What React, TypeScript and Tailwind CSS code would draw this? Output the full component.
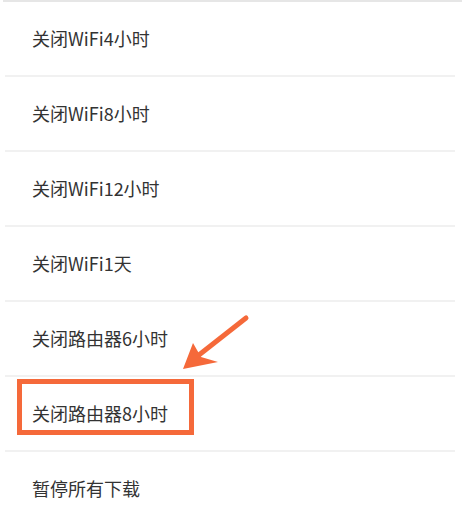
const items = [
  '关闭WiFi4小时',
  '关闭WiFi8小时',
  '关闭WiFi12小时',
  '关闭WiFi1天',
  '关闭路由器6小时',
  '关闭路由器8小时',
  '暂停所有下载',
];

export default function App() {
  return (
    <div
      className="relative w-[465px] h-[513px] overflow-hidden bg-white"
      style={{ fontFamily: '"Noto Sans CJK SC", "Noto Sans", sans-serif' }}
    >
      <div className="border-t-2 border-[#e6e6e6] mx-[3px]" />
      {items.map((label, i) => (
        <div key={label}>
          {i > 0 && <div className="h-[2px] bg-[#f1f1f1] mx-[5px] mr-[10px]" />}
          <div className="flex items-center h-[73px] pl-[32px] text-[18px] text-[#333]">
            {label}
          </div>
        </div>
      ))}

      {/* highlight box */}
      <div className="absolute left-[17px] top-[379px] w-[177px] h-[56px] border-[5px] border-[#f5693a]" />

      {/* arrow */}
      <svg className="absolute left-0 top-0" width="465" height="513" viewBox="0 0 465 513">
        <line x1="246" y1="318" x2="190" y2="362" stroke="#f5693a" strokeWidth="5" strokeLinecap="round" />
        <polygon points="183,369 193,343 201,357 218,362" fill="#f5693a" />
      </svg>
    </div>
  );
}
